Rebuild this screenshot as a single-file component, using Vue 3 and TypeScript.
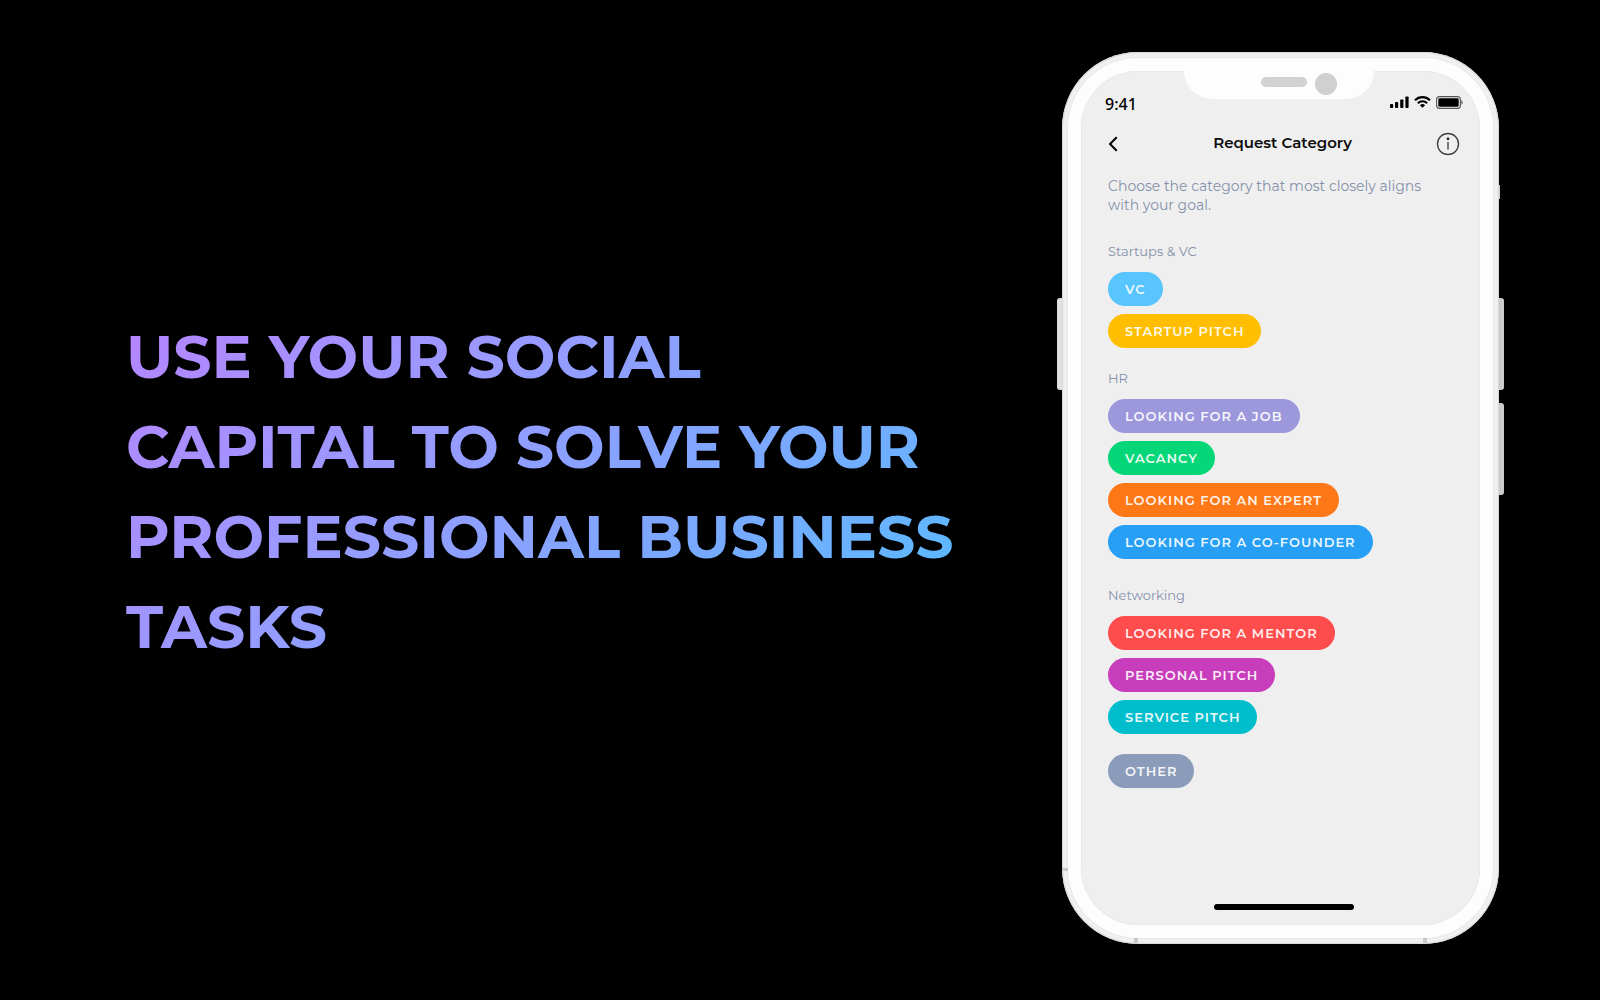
<script setup lang="ts">
interface Category {
  label: string
  tone: string
}

interface Group {
  id: string
  title?: string
  items: Category[]
}

const headline: string[] = [
  'Use your social',
  'capital to solve your',
  'professional business',
  'tasks',
]

const groups: Group[] = [
  {
    id: 'startups',
    title: 'Startups & VC',
    items: [
      { label: 'VC', tone: 'sky' },
      { label: 'Startup pitch', tone: 'amber' },
    ],
  },
  {
    id: 'hr',
    title: 'HR',
    items: [
      { label: 'Looking for a job', tone: 'lavender' },
      { label: 'Vacancy', tone: 'green' },
      { label: 'Looking for an expert', tone: 'orange' },
      { label: 'Looking for a co-founder', tone: 'blue' },
    ],
  },
  {
    id: 'networking',
    title: 'Networking',
    items: [
      { label: 'Looking for a mentor', tone: 'red' },
      { label: 'Personal pitch', tone: 'purple' },
      { label: 'Service pitch', tone: 'teal' },
    ],
  },
  { id: 'other', items: [{ label: 'Other', tone: 'slate' }] },
]
</script>

<template>
  <main class="stage">
    <h1 class="headline">
      <template v-for="(line, i) in headline" :key="line"><br v-if="i > 0" />{{ line }}</template>
    </h1>

    <div class="phone">
      <span class="key key-left"></span>
      <span class="key key-right-top"></span>
      <span class="key key-right-bottom"></span>
      <span class="key key-sim"></span>
      <span class="seam seam-left"></span>
      <span class="seam seam-bottom-left"></span>
      <span class="seam seam-bottom-right"></span>

      <div class="bezel">
        <section class="screen">
          <div class="notch">
            <span class="speaker"></span>
            <span class="camera"></span>
          </div>

          <div class="status">
            <span class="time">9:41</span>
            <span class="indicators">
              <svg width="19" height="12" viewBox="0 0 19 12" aria-hidden="true">
                <rect x="0" y="8" width="3.2" height="4" rx="0.9" />
                <rect x="5" y="6" width="3.2" height="6" rx="0.9" />
                <rect x="10.2" y="3.4" width="3.2" height="8.6" rx="0.9" />
                <rect x="15.4" y="0.4" width="3.2" height="11.6" rx="0.9" />
              </svg>
              <svg width="17" height="12" viewBox="0 0 17 12" aria-hidden="true">
                <path d="M1 4.2a10.8 10.8 0 0 1 15 0" fill="none" stroke="#000" stroke-width="2.2" />
                <path d="M3.8 7.2a6.8 6.8 0 0 1 9.4 0" fill="none" stroke="#000" stroke-width="2" />
                <path d="M8.5 11.8 5.9 9.2a3.8 3.8 0 0 1 5.2 0z" />
              </svg>
              <svg width="27" height="13" viewBox="0 0 27 13" aria-hidden="true">
                <rect x="0.6" y="0.6" width="23.8" height="11.8" rx="3" fill="none" stroke="#555" stroke-width="1.1" />
                <rect x="2.3" y="2.3" width="20.4" height="8.4" rx="1.4" />
                <path d="M25.4 4.3c1.7.7 1.7 3.7 0 4.4z" fill="#555" />
              </svg>
            </span>
          </div>

          <header class="nav">
            <button class="icon-button back" type="button" aria-label="Back">
              <svg width="10" height="16" viewBox="0 0 10 16" aria-hidden="true">
                <path d="M8.2 1.8 2 8l6.2 6.2" fill="none" stroke="#000" stroke-width="2" stroke-linecap="round" stroke-linejoin="round" />
              </svg>
            </button>
            <h2 class="title">Request Category</h2>
            <button class="icon-button info" type="button" aria-label="Information">
              <svg width="24" height="24" viewBox="0 0 24 24" aria-hidden="true">
                <circle cx="12" cy="12" r="10.5" fill="none" stroke="#444" stroke-width="1.4" />
                <circle cx="12" cy="6.8" r="1.4" fill="#222" />
                <path d="M12 10v7.4" stroke="#444" stroke-width="1.4" />
              </svg>
            </button>
          </header>

          <div class="content">
            <p class="intro">Choose the category that most closely aligns with your goal.</p>
            <section v-for="group in groups" :key="group.id" class="group" :class="group.id">
              <h3 v-if="group.title" class="group-title">{{ group.title }}</h3>
              <div class="pills">
                <button v-for="item in group.items" :key="item.label" type="button" class="pill" :class="item.tone">
                  {{ item.label }}
                </button>
              </div>
            </section>
          </div>

          <div class="home-bar"></div>
        </section>
      </div>
    </div>
  </main>
</template>

<style>
body {
  background: #000;
}
</style>

<style scoped>
.stage {
  box-sizing: border-box;
  min-height: 100vh;
  padding: 52px 101px 56px 126px;
  display: flex;
  align-items: center;
  justify-content: space-between;
  gap: 48px;
  background: #000;
  font-family: Montserrat, Inter, "Liberation Sans", sans-serif;
}

.headline {
  margin: 0;
  padding-bottom: 12px;
  font-size: 60px;
  line-height: 90px;
  font-weight: 700;
  text-transform: uppercase;
  white-space: nowrap;
  color: transparent;
  background: linear-gradient(135deg, #b684ff 0%, #999aff 35%, #7ba8ff 65%, #52bfff 100%);
  -webkit-background-clip: text;
  background-clip: text;
}

.phone {
  position: relative;
  flex: none;
  box-sizing: border-box;
  width: 437px;
  padding: 6px;
  border-radius: 76px;
  background: #f0f0f0;
  box-shadow: inset 0 0 1px 1px #d8d8d8;
}

.bezel {
  padding: 13px;
  border-radius: 70px;
  background: #fdfdfd;
  box-shadow: 0 0 0 1px #e8e8e8;
}

.screen {
  position: relative;
  box-sizing: border-box;
  min-height: 854px;
  padding: 20px 17px 15px 24px;
  border-radius: 57px;
  display: flex;
  flex-direction: column;
  background: #efeff0;
  box-shadow: inset 0 0 0 1px #e9e9ee;
}

.key,
.seam {
  position: absolute;
}

.key {
  width: 5px;
  height: 92px;
  background: #cbcbcb;
}

.key-left {
  left: -5px;
  top: 246px;
  border-radius: 3px 0 0 3px;
  background: #e0e0e0;
}

.key-right-top {
  right: -5px;
  top: 246px;
  border-radius: 0 3px 3px 0;
}

.key-right-bottom {
  right: -5px;
  top: 351px;
  border-radius: 0 3px 3px 0;
}

.key-sim {
  right: -1px;
  top: 133px;
  width: 1px;
  height: 14px;
}

.seam {
  background: #c9c9c9;
}

.seam-left {
  left: 0;
  top: 816px;
  width: 6px;
  height: 3px;
}

.seam-bottom-left,
.seam-bottom-right {
  bottom: 1px;
  width: 4px;
  height: 5px;
}

.seam-bottom-left {
  left: 72px;
}

.seam-bottom-right {
  right: 72px;
}

.notch {
  position: absolute;
  top: 0;
  left: 50%;
  width: 190px;
  height: 28px;
  margin-left: -97px;
  border-radius: 0 0 28px 28px;
  background: #fdfdfd;
  display: flex;
  justify-content: flex-end;
  align-items: flex-start;
  gap: 8px;
  box-sizing: border-box;
  padding: 2px 37px 0 0;
}

.speaker {
  width: 46px;
  height: 10px;
  margin-top: 4px;
  border-radius: 5px;
  background: #d2d2d2;
}

.camera {
  width: 22px;
  height: 22px;
  border-radius: 50%;
  background: #d0d0d0;
}

.status,
.nav {
  display: flex;
  align-items: center;
  justify-content: space-between;
  height: 24px;
}

.time {
  padding-top: 2px;
  font-family: "Noto Sans", "Open Sans", sans-serif;
  font-size: 16px;
  line-height: 24px;
  font-weight: 500;
  color: #000;
}

.indicators {
  display: flex;
  align-items: center;
  gap: 5px;
  padding-bottom: 2px;
}

.nav {
  margin-top: 17px;
}

.icon-button {
  width: 24px;
  height: 24px;
  padding: 0;
  border: 0;
  background: none;
  display: flex;
  align-items: center;
  cursor: pointer;
}

.back {
  padding-left: 3px;
}

.info {
  margin-right: 3px;
}

.title {
  margin: 0;
  padding-bottom: 2px;
  font-size: 15px;
  line-height: 24px;
  font-weight: 600;
  color: #0a0a0a;
}

.content {
  margin-left: 3px;
}

.intro {
  max-width: 330px;
  margin: 21px 0 28px;
  font-size: 14px;
  line-height: 19px;
  font-weight: 400;
  color: #8591aa;
}

.group + .group {
  margin-top: 22px;
}

.group.networking {
  margin-top: 28px;
}

.group.other {
  margin-top: 20px;
}

.group-title {
  margin: 0 0 13px;
  font-size: 13px;
  line-height: 16px;
  font-weight: 400;
  color: #8591aa;
}

.pills {
  display: flex;
  flex-direction: column;
  align-items: flex-start;
  gap: 8px;
}

.pill {
  height: 34px;
  padding: 0 17px;
  border: 0;
  border-radius: 17px;
  font-family: inherit;
  font-size: 13px;
  line-height: 32px;
  font-weight: 600;
  letter-spacing: 1px;
  text-transform: uppercase;
  white-space: nowrap;
  color: rgba(255, 255, 255, 0.92);
  cursor: pointer;
}

.sky { background: #58c5ff; }
.amber { background: #ffbf00; }
.lavender { background: #9d97dc; }
.green { background: #05d778; }
.orange { background: #ff7817; }
.blue { background: #269ff5; }
.red { background: #ff4c4c; }
.purple { background: #c83dbb; }
.teal { background: #02becd; }
.slate { background: #8b9bba; }

.home-bar {
  width: 140px;
  height: 6px;
  margin: auto auto 0;
  border-radius: 3px;
  background: #000;
}
</style>
